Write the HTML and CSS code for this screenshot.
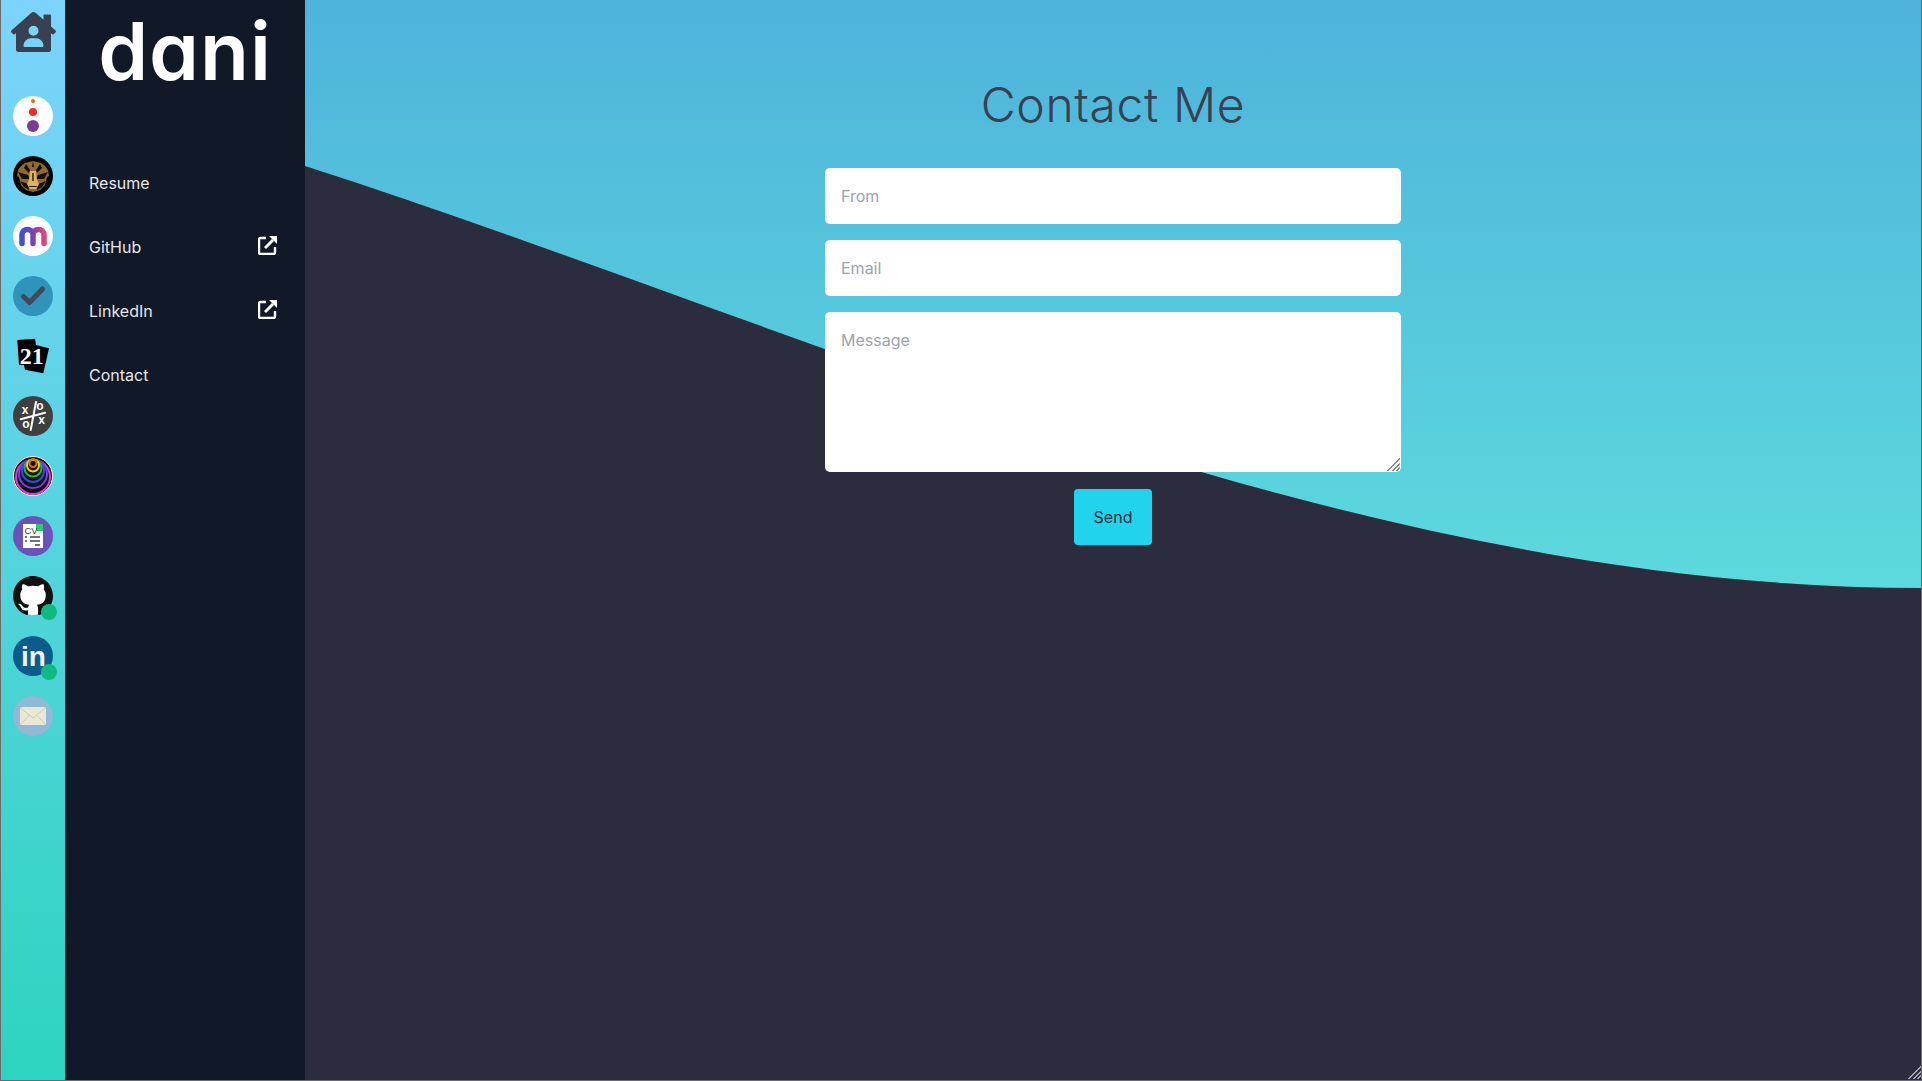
FILE: index.html
```html
<!DOCTYPE html>
<html>
<head>
    <title>Contact Me</title>
    <link rel="stylesheet" href="styles.css">
</head>
<body>
    <div class="app">
        <nav class="rail">
            <a class="home-link">
                <svg class="home-icon" viewBox="0 0 576 512"><path fill="#374151" d="M570.69,236.27,512,184.44V48a16,16,0,0,0-16-16H432a16,16,0,0,0-16,16V99.67L314.78,10.3C308.5,4.61,296.53,0,288,0s-20.46,4.61-26.74,10.3l-256,226A18.27,18.27,0,0,0,0,248.2a18.64,18.64,0,0,0,4.09,10.71L25.5,282.7a21.14,21.14,0,0,0,12,5.3,21.67,21.67,0,0,0,10.69-4.11l15.9-14V480a32,32,0,0,0,32,32H480a32,32,0,0,0,32-32V269.88l15.91,14A21.94,21.94,0,0,0,538.63,288a20.89,20.89,0,0,0,11.87-5.31l21.41-23.81A21.64,21.64,0,0,0,576,248.19,21,21,0,0,0,570.69,236.27ZM288,176a64,64,0,1,1-64,64A64,64,0,0,1,288,176ZM400,448H176a16,16,0,0,1-16-16,96,96,0,0,1,96-96h64a96,96,0,0,1,96,96A16,16,0,0,1,400,448Z"/></svg>
            </a>
            <div class="rail-apps">
                <a class="app-link">
                    <svg class="app-icon" viewBox="0 0 40 40">
                        <circle cx="20" cy="20" r="20" fill="#fff"/>
                        <circle cx="20" cy="5" r="2" fill="#ef6c00"/>
                        <circle cx="20" cy="16" r="4" fill="#ee2b2b"/>
                        <circle cx="20" cy="30" r="6" fill="#7b3a96"/>
                    </svg>
                </a>
                <a class="app-link">
                    <svg class="app-icon" viewBox="0 0 40 40">
                        <circle cx="20" cy="20" r="20" fill="#000"/>
                        <path fill="#8f6a30" d="M12 7l8-2 8 2 4 3 3 4 1 6-2 1-2 8-5 5-7 2-7-2-5-5-2-8-2-1 1-6 3-4z"/>
                        <path fill="#140e06" d="M5 16l10 3 2 4-8 0zM35 16l-10 3-2 4 8 0zM13 8l4 6-1 3-5-5zM27 8l-4 6 1 3 5-5zM20 5l1 6h-2zM7 25l8 3 1 6-5-3zM33 25l-8 3-1 6 5-3z"/>
                        <path fill="#dcb266" d="M17 15h6l1 9 2 4-3 5h-6l-3-5 2-4z"/>
                        <path fill="#2a1c0c" d="M15 30h10l-2 1h-6zM19.300 17h1.400v8h-1.400z"/>
                    </svg>
                </a>
                <a class="app-link">
                    <svg class="app-icon" viewBox="0 0 40 40">
                        <defs>
                            <linearGradient id="m-grad" x1="0" x2="1" y1="0" y2="0">
                                <stop offset="0" stop-color="#3f51c4"/>
                                <stop offset="0.55" stop-color="#8a3fa8"/>
                                <stop offset="1" stop-color="#d9487f"/>
                            </linearGradient>
                        </defs>
                        <circle cx="20" cy="20" r="20" fill="#fff"/>
                        <path fill="none" stroke="url(#m-grad)" stroke-width="5.500" stroke-linecap="round" d="M9 27.500V19c0-7.500 11-7.500 11 0v8.500M20 19c0-7.500 11-7.500 11 0v8.500"/>
                    </svg>
                </a>
                <a class="app-link">
                    <svg class="app-icon" viewBox="0 0 40 40">
                        <circle cx="20" cy="20" r="20" fill="#2f93bb"/>
                        <path fill="none" stroke="#3d4a59" stroke-width="5" stroke-linecap="round" stroke-linejoin="round" d="M10.500 20.500l6 6L29.500 13"/>
                    </svg>
                </a>
                <a class="app-link">
                    <svg class="app-icon" viewBox="0 0 40 40">
                        <path fill="#000" d="M4.300 4L22 2.700 23 9l13 3.300-5.700 25L12 33.700 11 29l-5 0z"/>
                        <text class="cards-text" x="18.700" y="27.500">21</text>
                    </svg>
                </a>
                <a class="app-link">
                    <svg class="app-icon" viewBox="0 0 40 40">
                        <circle cx="20" cy="20" r="20" fill="#3f3f3f"/>
                        <path stroke="#fff" stroke-width="2" stroke-linecap="round" d="M23 6l-5.300 28M7.700 23.300L32 16.700"/>
                        <text class="ttt-text" x="12" y="18">x</text>
                        <text class="ttt-text" x="27" y="14">o</text>
                        <text class="ttt-text" x="13" y="32">o</text>
                        <text class="ttt-text" x="28.700" y="28.300">x</text>
                    </svg>
                </a>
                <a class="app-link">
                    <svg class="app-icon" viewBox="0 0 40 40">
                        <circle cx="20" cy="20" r="19.500" fill="#111" stroke="#fff" stroke-width="1"/>
                        <g fill="none" stroke-width="2">
                            <ellipse cx="20" cy="21" rx="17" ry="17" stroke="#d63fe0"/>
                            <ellipse cx="20" cy="18" rx="14" ry="14" stroke="#7a3be0"/>
                            <ellipse cx="20" cy="15" rx="11" ry="11" stroke="#2a4ee8"/>
                            <ellipse cx="20" cy="12" rx="8.500" ry="8.500" stroke="#22b83a"/>
                            <ellipse cx="20" cy="9.500" rx="6" ry="6" stroke="#e8d020"/>
                            <ellipse cx="20" cy="7" rx="3.500" ry="4" stroke="#ee6a10"/>
                        </g>
                    </svg>
                </a>
                <a class="app-link">
                    <svg class="app-icon" viewBox="0 0 40 40">
                        <circle cx="20" cy="20" r="20" fill="#6a52b8"/>
                        <path fill="#fff" d="M10 8h20v24H10z"/>
                        <rect x="23" y="8" width="7" height="7" fill="#2ecc71"/>
                        <text class="cv-text" x="11.500" y="18">CV</text>
                        <path stroke="#444" stroke-width="1.500" d="M17 21h10M17 25h10M22 29h5M12 21h2M12 25h2"/>
                    </svg>
                </a>
                <a class="app-link">
                    <svg class="app-icon" viewBox="0 0 40 40">
                        <circle cx="20" cy="20" r="19" fill="#fff"/>
                        <path transform="scale(2.5)" fill="#111" d="M8 0C3.58 0 0 3.58 0 8c0 3.54 2.29 6.53 5.47 7.59.4.07.55-.17.55-.38 0-.19-.01-.82-.01-1.49-2.01.37-2.53-.49-2.69-.94-.09-.23-.48-.94-.82-1.13-.28-.15-.68-.52-.01-.53.63-.01 1.08.58 1.23.82.72 1.21 1.87.87 2.33.66.07-.52.28-.87.51-1.07-1.78-.2-3.64-.89-3.64-3.95 0-.87.31-1.59.82-2.15-.08-.2-.36-1.02.08-2.12 0 0 .67-.21 2.2.82.64-.18 1.32-.27 2-.27.68 0 1.36.09 2 .27 1.53-1.04 2.2-.82 2.2-.82.44 1.1.16 1.92.08 2.12.51.56.82 1.27.82 2.15 0 3.07-1.87 3.75-3.65 3.95.29.25.54.73.54 1.48 0 1.07-.01 1.93-.01 2.2 0 .21.15.46.55.38A8.013 8.013 0 0016 8c0-4.42-3.58-8-8-8z"/>
                    </svg>
                    <span class="status-dot"></span>
                </a>
                <a class="app-link">
                    <svg class="app-icon" viewBox="0 0 40 40">
                        <circle cx="20" cy="20" r="20" fill="#0a5c8a"/>
                        <text class="in-text" x="20.500" y="29.700">in</text>
                    </svg>
                    <span class="status-dot"></span>
                </a>
                <a class="app-link">
                    <svg class="app-icon" viewBox="0 0 40 40">
                        <circle cx="20" cy="20" r="20" fill="#8fb9d6"/>
                        <rect x="7" y="11" width="26" height="18" rx="1.500" fill="#e9e7d6"/>
                        <path fill="none" stroke="#cfcbb6" stroke-width="1" d="M7.500 12l12.500 10 12.500-10M8 28l8.500-9M32 28l-8.500-9"/>
                    </svg>
                </a>
            </div>
        </nav>

        <aside class="sidebar">
            <div class="logo">dani</div>
            <ul class="nav-list">
                <li class="nav-item">Resume</li>
                <li class="nav-item">GitHub
                    <svg class="external-icon" viewBox="0 0 20 20">
                        <path class="external-box" d="M8 3H2.500A1.500 1.500 0 0 0 1 4.500v13A1.500 1.500 0 0 0 2.500 19h13a1.500 1.500 0 0 0 1.500-1.500V12"/>
                        <path class="external-shaft" d="M7 13l8-8"/>
                        <path class="external-head" d="M11 1h8v8z"/>
                    </svg>
                </li>
                <li class="nav-item">LinkedIn
                    <svg class="external-icon" viewBox="0 0 20 20">
                        <path class="external-box" d="M8 3H2.500A1.500 1.500 0 0 0 1 4.500v13A1.500 1.500 0 0 0 2.500 19h13a1.500 1.500 0 0 0 1.500-1.500V12"/>
                        <path class="external-shaft" d="M7 13l8-8"/>
                        <path class="external-head" d="M11 1h8v8z"/>
                    </svg>
                </li>
                <li class="nav-item">Contact</li>
            </ul>
        </aside>

        <main class="content">
            <svg class="wave" width="1616" height="1080"><path fill="#2b2c3e" d="M0 166C495 325 1045 588 1616 588V1080H0Z"/></svg>
            <h1 class="title">Contact Me</h1>
            <form class="contact-form">
                <input class="field" type="text" placeholder="From">
                <input class="field" type="text" placeholder="Email">
                <div class="message-wrap">
                    <textarea class="field message" placeholder="Message"></textarea>
                    <span class="grip grip-message"></span>
                </div>
                <button class="send-btn" type="button">Send</button>
            </form>
            <span class="grip grip-window"></span>
        </main>
    </div>
</body>
</html>
```

FILE: styles.css
```css
* {
    box-sizing: border-box;
}

html, body {
    height: 100%;
}

body {
    margin: 0;
    padding: 0 1px 1px;
    background: #6b6b6b;
    font-family: Inter, "Noto Sans", sans-serif;
    overflow: hidden;
}

.app {
    display: flex;
    width: 100%;
    height: 100%;
    overflow: hidden;
}

.rail {
    width: 64px;
    flex-shrink: 0;
    display: flex;
    flex-direction: column;
    align-items: center;
    padding-top: 12px;
    background: linear-gradient(#7dd3fc, #2dd4bf);
}

.home-link {
    display: block;
    height: 40px;
    margin-bottom: 44px;
}

.home-icon {
    display: block;
    width: 45px;
    height: 40px;
}

.rail-apps {
    display: flex;
    flex-direction: column;
    gap: 20px;
}

.app-link {
    display: block;
    position: relative;
    width: 40px;
    height: 40px;
}

.app-icon {
    display: block;
    width: 40px;
    height: 40px;
}

.status-dot {
    position: absolute;
    right: -4px;
    bottom: -4px;
    width: 16px;
    height: 16px;
    border-radius: 50%;
    background: #10b981;
}

.cards-text {
    font-family: "Liberation Serif", serif;
    font-weight: 700;
    font-size: 24px;
    fill: #fff;
    text-anchor: middle;
}

.ttt-text {
    font-family: "Liberation Sans", sans-serif;
    font-weight: 700;
    font-size: 12px;
    fill: #fff;
    text-anchor: middle;
}

.cv-text {
    font-family: "Liberation Sans", sans-serif;
    font-size: 9.5px;
    fill: #444;
}

.in-text {
    font-family: "Liberation Sans", sans-serif;
    font-weight: 700;
    font-size: 28px;
    fill: #f2f2f2;
    text-anchor: middle;
}

.sidebar {
    width: 240px;
    flex-shrink: 0;
    background: #111827;
    color: #e5e7eb;
}

.logo {
    height: 151px;
    padding-top: 6px;
    text-align: center;
    font-size: 80px;
    font-weight: 600;
    line-height: 90px;
    letter-spacing: 1px;
    color: #fff;
    font-feature-settings: "cv11";
}

.nav-list {
    list-style: none;
    margin: 0;
    padding: 0;
}

.nav-item {
    display: flex;
    align-items: center;
    justify-content: space-between;
    height: 64px;
    padding: 0 24px;
    font-size: 16px;
}

.external-icon {
    width: 20px;
    height: 20px;
    margin: -5px 3px 0 0;
}

.external-box {
    fill: none;
    stroke: #fff;
    stroke-width: 2.4;
}

.external-shaft {
    fill: none;
    stroke: #fff;
    stroke-width: 3;
}

.external-head {
    fill: #fff;
}

.content {
    position: relative;
    flex: 1;
    display: flex;
    flex-direction: column;
    align-items: center;
    padding-top: 81px;
    overflow: hidden;
    background: linear-gradient(#4fb3dc 0, #5cdadd 590px);
}

.wave {
    position: absolute;
    top: 0;
    left: 0;
}

.title {
    position: relative;
    margin: 0 0 39px;
    font-size: 48px;
    font-weight: 300;
    line-height: 48px;
    letter-spacing: 0.6px;
    color: #374151;
}

.contact-form {
    position: relative;
    width: 576px;
    display: flex;
    flex-direction: column;
    align-items: center;
    gap: 16px;
}

.field {
    display: block;
    width: 100%;
    height: 56px;
    padding: 16px;
    border: none;
    border-radius: 5px;
    background: #fff;
    font-family: inherit;
    font-size: 16px;
    line-height: 24px;
    color: #111827;
}

.field::placeholder {
    color: #9ca3af;
}

.message-wrap {
    position: relative;
    width: 100%;
}

.message {
    height: 160px;
    resize: none;
}

/* resize corner, striped triangle */
.grip {
    position: absolute;
    width: 14px;
    height: 14px;
    clip-path: polygon(100% 0, 100% 100%, 0 100%);
}

.grip-message {
    right: 1px;
    bottom: 1px;
    background: repeating-linear-gradient(135deg, #fff 0 1.5px, #8c8c8c 1.5px 3px);
}

.grip-window {
    right: 0;
    bottom: 1px;
    background: repeating-linear-gradient(135deg, #2b2c3e 0 1.5px, #a9a9b4 1.5px 3px);
}

.send-btn {
    width: 78px;
    height: 56px;
    margin-top: 1px;
    border: none;
    border-radius: 4px;
    background: #22d3ee;
    font-family: inherit;
    font-size: 16px;
    color: #1f2937;
}
```
